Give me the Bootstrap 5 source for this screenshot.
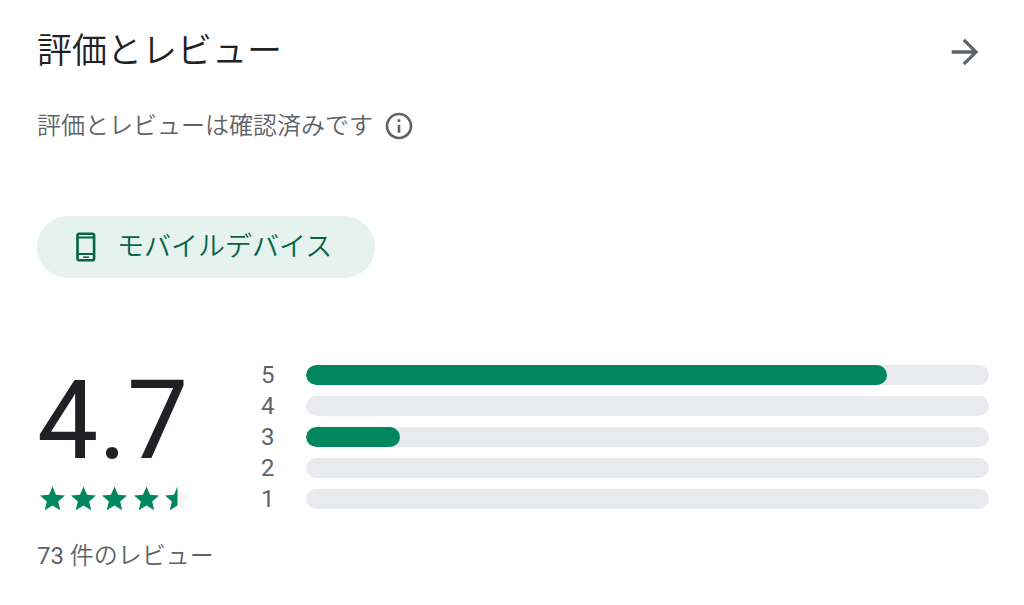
<!DOCTYPE html>
<html lang="ja">
<head>
<meta charset="utf-8">
<meta name="viewport" content="width=device-width, initial-scale=1">
<title>評価とレビュー</title>
<link href="https://cdn.jsdelivr.net/npm/bootstrap@5.3.0/dist/css/bootstrap.min.css" rel="stylesheet">
<style>
  body { font-family: Roboto, "Noto Sans CJK JP", sans-serif; color: #202124; background: #fff; }
  svg { display: block; flex: none; }
  .reviews { padding: 26px 35px 24px 37px; }
  .reviews-title { font-size: 35px; line-height: 52px; font-weight: 350; }
  .icon-btn { border: 0; padding: 0; background: none; color: #5f6368; }
  .muted-text { color: #5f6368; font-size: 24px; line-height: 32px; font-weight: 350; }
  .verified { margin-top: 32px; gap: 10px; }
  .device-chip { margin-top: 74px; height: 62px; padding: 0 43px 0 34px; gap: 16px; background: #e5f2ed; color: #056449; font-size: 27px; line-height: 32px; font-weight: 350; border: 0; }
  .summary { margin-top: 87px; gap: 48px; }
  .score-col { width: 176px; }
  .score { font-size: 109px; line-height: 112px; }
  .stars { margin-top: 9px; }
  .review-count { margin-top: 28px; white-space: nowrap; }
  .rating-row { height: 20px; margin-bottom: 11px; }
  .rating-label { width: 45px; font-size: 24px; line-height: 20px; color: #5f6368; }
  .rating-row .progress { height: 20px; border-radius: 10px; background: #e8eaed; }
  .rating-row .progress-bar { border-radius: 10px; background: #01875f; }
</style>
</head>
<body>
<main class="reviews">
  <header class="d-flex justify-content-between align-items-center">
    <h1 class="reviews-title m-0">評価とレビュー</h1>
    <button type="button" class="icon-btn me-1" aria-label="すべてのレビューを見る">
      <svg width="40" height="40" viewBox="0 0 24 24" fill="currentColor"><path d="M12 4l-1.41 1.41L16.17 11H4v2h12.17l-5.58 5.59L12 20l8-8z"/></svg>
    </button>
  </header>

  <div class="verified d-flex align-items-center">
    <p class="muted-text m-0">評価とレビューは確認済みです</p>
    <button type="button" class="icon-btn" aria-label="詳細">
      <svg width="32" height="32" viewBox="0 0 24 24" fill="currentColor"><path d="M11 7h2v2h-2zm0 4h2v6h-2zm1-9C6.48 2 2 6.48 2 12s4.480 10 10 10 10-4.480 10-10S17.520 2 12 2zm0 18c-4.410 0-8-3.590-8-8s3.590-8 8-8 8 3.590 8 8-3.590 8-8 8z"/></svg>
    </button>
  </div>

  <button type="button" class="device-chip btn rounded-pill d-inline-flex align-items-center">
    <svg width="30" height="30" viewBox="0 0 30 30" fill="none" stroke="currentColor"><rect x="6.500" y="1.700" width="16.600" height="26.600" rx="1.800" stroke-width="2.600"/><path d="M6 5.500h18M6 22h18" stroke-width="2.200"/><path d="M12 25.200h6" stroke-width="1.500"/></svg>
    <span>モバイルデバイス</span>
  </button>

  <section class="summary d-flex">
    <div class="score-col flex-shrink-0">
      <div class="score">4.7</div>
      <div class="stars" role="img" aria-label="5つ星のうち4.7">
        <svg width="156" height="26" viewBox="0 0 156 26">
          <defs>
            <path id="star" transform="translate(.5 -2) scale(1.25)" d="M12 17.270L18.180 21l-1.640-7.030L22 9.240l-7.190-.61L12 2 9.190 8.630 2 9.240l5.460 4.730L5.820 21z"/>
            <clipPath id="left-half"><path d="M0 0h15.500v26H0z"/></clipPath>
          </defs>
          <g fill="#01875f">
            <use href="#star"/><use href="#star" x="31"/><use href="#star" x="62"/><use href="#star" x="94"/>
          </g>
          <g transform="translate(125 0)">
            <use href="#star" fill="#f1f3f4"/>
            <g clip-path="url(#left-half)"><use href="#star" fill="#01875f"/></g>
          </g>
        </svg>
      </div>
      <p class="review-count muted-text mb-0"><span class="fw-normal">73</span> 件のレビュー</p>
    </div>
    <div class="flex-grow-1">
      <div class="rating-row d-flex align-items-center"><span class="rating-label">5</span><div class="progress flex-grow-1"><div class="progress-bar" style="width:85%"></div></div></div>
      <div class="rating-row d-flex align-items-center"><span class="rating-label">4</span><div class="progress flex-grow-1"></div></div>
      <div class="rating-row d-flex align-items-center"><span class="rating-label">3</span><div class="progress flex-grow-1"><div class="progress-bar" style="width:13.7%"></div></div></div>
      <div class="rating-row d-flex align-items-center"><span class="rating-label">2</span><div class="progress flex-grow-1"></div></div>
      <div class="rating-row d-flex align-items-center"><span class="rating-label">1</span><div class="progress flex-grow-1"></div></div>
    </div>
  </section>
</main>
<script src="https://cdn.jsdelivr.net/npm/bootstrap@5.3.0/dist/js/bootstrap.bundle.min.js"></script>
</body>
</html>
